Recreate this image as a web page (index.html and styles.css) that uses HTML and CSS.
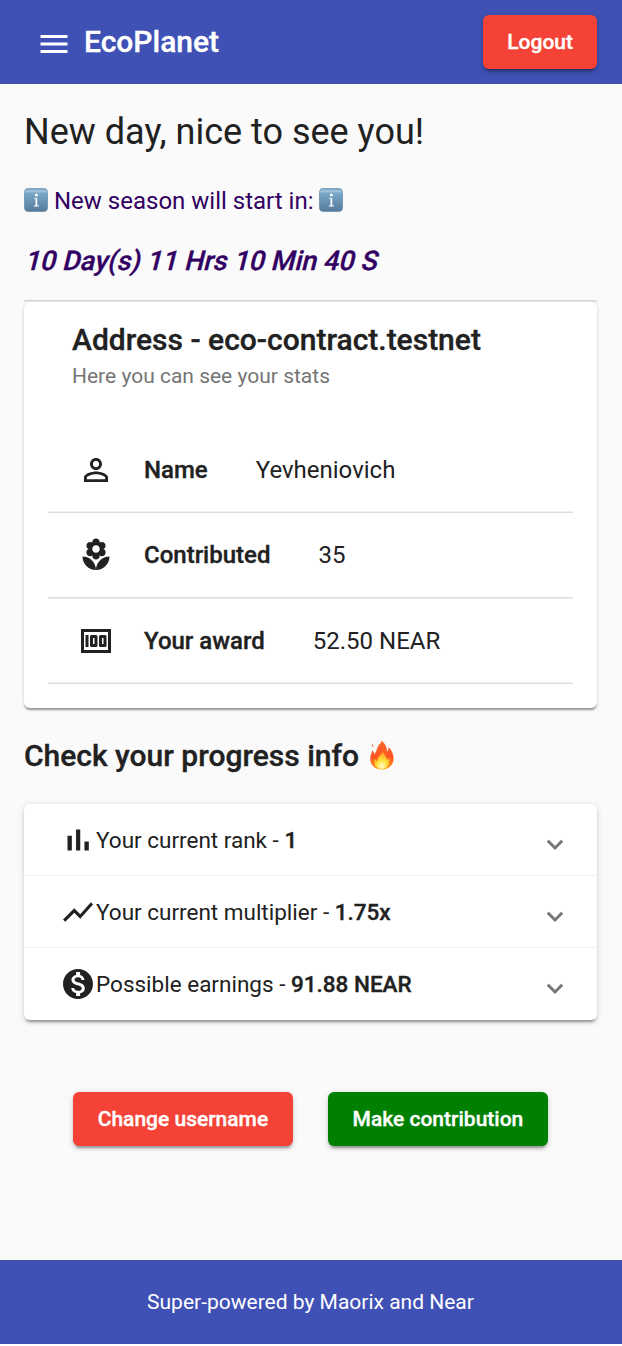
FILE: index.html
```html
<!DOCTYPE html>
<html lang="en">
<head>
<meta charset="utf-8">
<title>EcoPlanet</title>
<link rel="stylesheet" href="styles.css">
</head>
<body>
<svg class="defs" width="0" height="0" aria-hidden="true">
  <defs>
    <linearGradient id="tile" x1="0" y1="0" x2="0" y2="1">
      <stop offset="0" stop-color="#6f9fc0"/><stop offset=".12" stop-color="#a5c6dc"/><stop offset=".2" stop-color="#78a9ca"/><stop offset="1" stop-color="#55799a"/>
    </linearGradient>
    <linearGradient id="flame" x1="0" y1="0" x2="0" y2="1">
      <stop offset="0" stop-color="#ff6a2b"/><stop offset=".55" stop-color="#fd5322"/><stop offset="1" stop-color="#ffa01c"/>
    </linearGradient>
    <radialGradient id="core" cx=".5" cy=".85" r=".75">
      <stop offset="0" stop-color="#fffbd0"/><stop offset=".45" stop-color="#ffe23c"/><stop offset="1" stop-color="#ff9a1f"/>
    </radialGradient>
    <symbol id="info" viewBox="0 0 24 24">
      <rect x=".4" y=".4" width="23.2" height="23.2" rx="4" fill="url(#tile)" stroke="#5f87a5" stroke-width=".7"/>
      <circle cx="12.4" cy="7" r="1.5" fill="#fff"/>
      <path d="M10 10.300h3.300v7.300h1.500v.8H9.800v-.8h1.700v-6.500H10z" fill="#fff"/>
    </symbol>
    <symbol id="chevron" viewBox="0 0 18 12">
      <path d="M1.800 1.800 9 9l7.200-7.200" fill="none" stroke="#757575" stroke-width="3"/>
    </symbol>
  </defs>
</svg>

<header class="toolbar">
  <svg class="menu" viewBox="0 0 24 24"><path d="M3 18h18v-2H3v2zm0-5h18v-2H3v2zm0-7v2h18V6H3z"/></svg>
  <span class="brand">EcoPlanet</span>
  <button class="btn btn-warn">Logout</button>
</header>

<main class="content">
  <h1 class="greeting">New day, nice to see you!</h1>
  <p class="season"><svg class="info"><use href="#info"/></svg><span class="season-text">New season will start in:</span><svg class="info"><use href="#info"/></svg></p>
  <p class="countdown"><span class="countdown-text">10 Day(s) 11 Hrs 10 Min 40 S</span></p>
  <div class="rule"></div>

  <section class="card">
    <h2 class="card-title">Address - eco-contract.testnet</h2>
    <p class="card-sub">Here you can see your stats</p>
    <div class="stats">
      <div class="stat stat-first">
        <svg class="icon" viewBox="0 0 24 24"><path d="M12 5.900c1.160 0 2.100.94 2.100 2.100s-.94 2.100-2.100 2.100S9.900 9.160 9.900 8s.94-2.100 2.100-2.100m0 9c2.970 0 6.100 1.460 6.100 2.100v1.100H5.900V17c0-.64 3.130-2.100 6.100-2.100M12 4C9.790 4 8 5.790 8 8s1.790 4 4 4 4-1.790 4-4-1.790-4-4-4zm0 9c-2.670 0-8 1.340-8 4v3h16v-3c0-2.660-5.330-4-8-4z"/></svg>
        <b class="label">Name</b><span>Yevheniovich</span>
      </div>
      <div class="divider"></div>
      <div class="stat">
        <svg class="icon" viewBox="0 0 24 24"><path d="M12 22c4.970 0 9-4.030 9-9-4.970 0-9 4.030-9 9zM5.600 10.250c0 1.380 1.120 2.500 2.500 2.500.53 0 1.010-.16 1.420-.44l-.02.19c0 1.380 1.120 2.500 2.500 2.500s2.500-1.120 2.500-2.500l-.02-.19c.4.280.89.44 1.420.44 1.380 0 2.500-1.120 2.500-2.500 0-1-.59-1.850-1.430-2.250.84-.4 1.430-1.250 1.430-2.250 0-1.380-1.120-2.500-2.500-2.500-.53 0-1.010.16-1.420.44l.02-.19C14.500 2.120 13.380 1 12 1S9.500 2.120 9.500 3.500l.02.19c-.4-.28-.89-.44-1.420-.44-1.380 0-2.500 1.120-2.500 2.500 0 1 .59 1.850 1.430 2.250-.84.4-1.430 1.250-1.430 2.250zM12 5.500c1.380 0 2.500 1.120 2.500 2.500s-1.120 2.500-2.500 2.500S9.500 9.380 9.500 8s1.120-2.500 2.500-2.500zM3 13c0 4.970 4.030 9 9 9 0-4.970-4.030-9-9-9z"/></svg>
        <b class="label">Contributed</b><span>35</span>
      </div>
      <div class="divider divider-high"></div>
      <div class="stat stat-last">
        <svg class="icon" viewBox="0 0 24 24"><path fill-rule="evenodd" d="M2 4h20v16H2zM4 6v12h16V6zM5 8h2v8H5zM9 8h3q1 0 1 1v6q0 1-1 1H9q-1 0-1-1V9q0-1 1-1zm1 2v4h1v-4zM15 8h3q1 0 1 1v6q0 1-1 1h-3q-1 0-1-1V9q0-1 1-1zm1 2v4h1v-4z"/></svg>
        <b class="label">Your award</b><span>52.50 NEAR</span>
      </div>
      <div class="divider"></div>
    </div>
  </section>

  <h2 class="progress-title">Check your progress info
    <svg class="fire" viewBox="0 0 26 30"><path fill="url(#flame)" d="M12.500.5c4 3.200 5.600 7 5.500 11 1-.8 1.700-2.400 1.600-4.500 3 3 5 7.400 5 11.700 0 6.300-5 10.800-11.800 10.800S1.200 25 1.200 19c0-3.300 1.300-5.500 2-8.500 1.300 1 2 2.300 2.200 3.800C8 11 7.500 8.500 9.500 5.500c1.300-1.700 2.900-2.400 3-5zM4.200 7.200c-1.300-.9-1.700-2-1.100-3.200.9.900 1.500 2 1.100 3.200z"/><path fill="url(#core)" d="M13.800 10.500c.2 4 4.200 5 4.200 9.500 1-.4 1.700-1.600 2-3 1.600 5.500-1.200 12-7.200 12-5.500 0-8.500-4.500-7-10.500.7 1.700 1.500 2.500 2.700 2.800-.7-5 4.600-6 5.300-10.800z"/></svg>
  </h2>

  <section class="accordion">
    <div class="panel">
      <svg class="icon" viewBox="0 0 24 24"><path d="M5 9.200h2.900V19H5zM10.700 5h2.800v14h-2.800zM16.300 13h2.900v6h-2.900z"/></svg>
      <span class="panel-text">Your current rank - <b>1</b></span><svg class="chevron"><use href="#chevron"/></svg>
    </div>
    <div class="panel">
      <svg class="icon" viewBox="0 0 24 24"><path d="M3.500 18.490l6-6.010 4 4L22 6.920l-1.410-1.410-7.090 7.970-4-4L2 16.990z"/></svg>
      <span class="panel-text">Your current multiplier - <b>1.75x</b></span><svg class="chevron"><use href="#chevron"/></svg>
    </div>
    <div class="panel">
      <svg class="icon" viewBox="0 0 24 24"><path d="M12 2C6.480 2 2 6.480 2 12s4.480 10 10 10 10-4.480 10-10S17.520 2 12 2zm1.410 16.090V20h-2.670v-1.930c-1.710-.36-3.160-1.460-3.270-3.400h1.960c.1 1.050.82 1.870 2.650 1.870 1.960 0 2.400-.98 2.400-1.590 0-.83-.44-1.610-2.670-2.140-2.480-.6-4.180-1.620-4.180-3.670 0-1.720 1.390-2.840 3.110-3.210V4h2.670v1.950c1.860.45 2.790 1.860 2.850 3.390H14.300c-.05-1.110-.64-1.870-2.220-1.870-1.500 0-2.400.68-2.400 1.640 0 .84.65 1.390 2.670 1.910s4.180 1.390 4.180 3.910c-.01 1.830-1.380 2.830-3.120 3.160z"/></svg>
      <span class="panel-text">Possible earnings - <b>91.88 NEAR</b></span><svg class="chevron"><use href="#chevron"/></svg>
    </div>
  </section>

  <div class="actions">
    <button class="btn btn-warn btn-wide">Change username</button>
    <button class="btn btn-green btn-wide">Make contribution</button>
  </div>
</main>

<footer class="footer">Super-powered by Maorix and Near</footer>
</body>
</html>
```

FILE: styles.css
```css
* { box-sizing: border-box; }
html { background: #fff; }
body {
  margin: 0;
  width: 622px;
  height: 1346px;
  font-family: Roboto, "Liberation Sans", sans-serif;
  color: #212121;
  -webkit-font-smoothing: antialiased;
}
.defs { position: absolute; }
h1, h2, p { margin: 0; white-space: nowrap; }
svg { flex: none; fill: currentColor; }
b { font-weight: 500; }
b, .brand, .btn, .card-title, .progress-title { -webkit-text-stroke: .35px currentColor; }

.toolbar {
  display: flex;
  align-items: center;
  height: 84px;
  padding: 0 25px 0 36px;
  background: #3f51b5;
  color: #fff;
}
.menu { width: 36px; height: 36px; margin: 4px 12px 0 0; }
.brand { flex: 1; font-size: 30px; font-weight: 500; line-height: 84px; }

.btn {
  height: 54px;
  padding: 0 24px;
  border: 0;
  border-radius: 6px;
  font: 500 21px/54px Roboto, "Liberation Sans", sans-serif;
  color: #fff;
  white-space: nowrap;
  box-shadow: 0 4.5px 1.5px -3px rgba(0,0,0,.2), 0 3px 3px rgba(0,0,0,.14), 0 1.5px 7.5px rgba(0,0,0,.12);
}
.btn-warn { background: #f44336; }
.btn-green { background: #008000; }
.btn-wide { width: 219.5px; padding: 0; }

.content {
  height: 1176px;
  padding: 24px 25px 0 24px;
  background: #fafafa;
}
.greeting { font-size: 36px; font-weight: 400; line-height: 48px; }
.season {
  display: flex;
  align-items: center;
  height: 30px;
  margin-top: 29px;
  font-size: 24px;
  line-height: 32px;
  color: #310062;
}
.season-text { margin: 1px 5px 0 6px; }
.info { width: 24px; height: 24px; }
.countdown {
  margin-top: 30px;
  font-size: 27px;
  font-weight: 500;
  line-height: 32px;
  color: #310062;
}
.countdown-text {
  display: inline-block;
  transform: skewX(-14deg);
  transform-origin: 0 26px;
  -webkit-text-stroke: .35px currentColor;
}
.rule { height: 2px; margin-top: 23px; background: linear-gradient(#d6d6d6 50%, #e8e8e8 50%); }

.card, .accordion {
  border-radius: 6px;
  background: #fff;
  box-shadow: 0 3px 1.5px -1.5px rgba(0,0,0,.2), 0 1.5px 1.5px rgba(0,0,0,.14), 0 1.5px 4.5px rgba(0,0,0,.12);
}
.card { height: 406px; padding: 20px 24px 0; }
.card-title { padding-left: 24px; font-size: 30px; font-weight: 500; line-height: 36px; }
.card-sub { padding-left: 24px; margin-top: 2px; font-size: 21px; line-height: 32px; color: #757575; }
.stats { margin-top: 35px; }
.stat {
  display: flex;
  align-items: center;
  height: 84px;
  padding-left: 30px;
  font-size: 24px;
}
.stat-first { padding-top: 2px; }
.stat-last { height: 83px; padding-top: 1px; }
.icon { width: 36px; height: 36px; }
.label { margin: 0 48px 0 30px; }
.divider { height: 2px; background: linear-gradient(#efefef 50%, #dedede 50%); }
.divider-high { background: linear-gradient(#dedede 50%, #efefef 50%); }

.progress-title {
  display: flex;
  align-items: center;
  margin-top: 30px;
  font-size: 30px;
  font-weight: 500;
  line-height: 36px;
}
.fire { width: 26px; height: 30px; margin: 0 0 2px 10px; }

.accordion {
  margin-top: 30px;
  box-shadow: 0 4.5px 1.5px -3px rgba(0,0,0,.2), 0 3px 3px rgba(0,0,0,.14), 0 1.5px 7.5px rgba(0,0,0,.12);
}
.panel {
  display: flex;
  align-items: center;
  height: 72px;
  padding: 0 33px 0 36px;
  font-size: 22.5px;
}
.panel + .panel { box-shadow: 0 -1px 1px #f3f3f3; }
.panel-text { flex: 1; }
.chevron { width: 18px; height: 12px; margin-top: 9px; }
.actions { display: flex; gap: 35.5px; margin-top: 72px; padding-left: 49.2px; }
.footer {
  height: 84px;
  padding-right: 1px;
  background: #3f51b5;
  color: #fff;
  font-size: 21px;
  line-height: 84px;
  text-align: center;
}
```
